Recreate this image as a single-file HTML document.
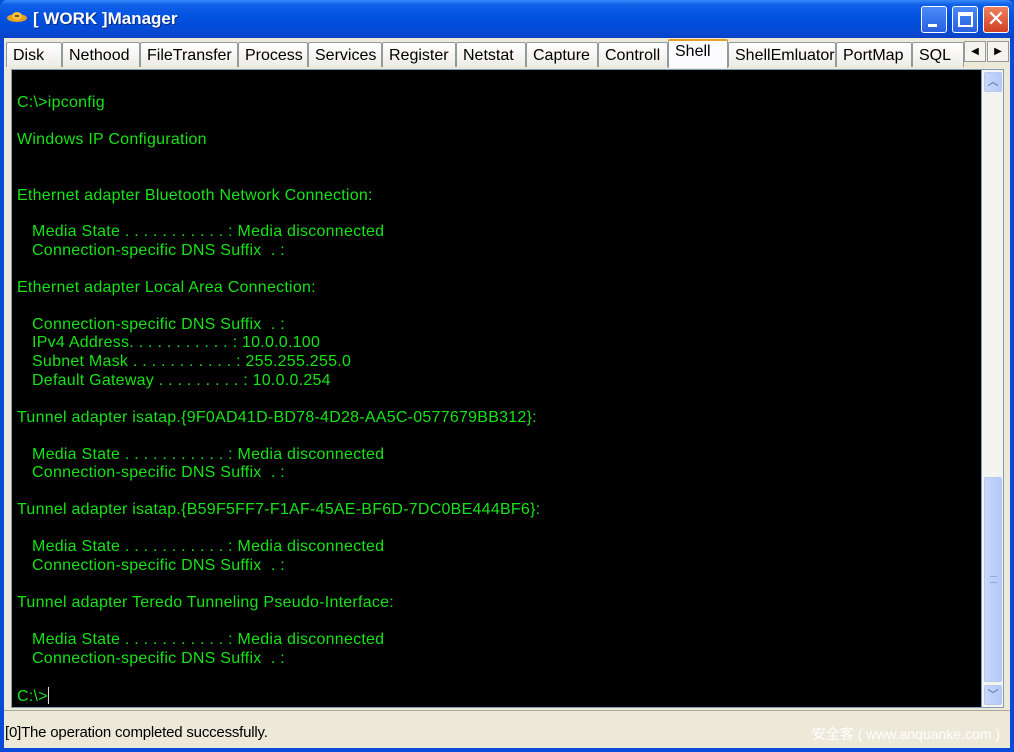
<!DOCTYPE html>
<html><head><meta charset="utf-8"><style>
*{margin:0;padding:0;box-sizing:border-box}
body{width:1014px;height:752px;overflow:hidden;background:#0a4ad8;font-family:Tahoma,"Liberation Sans","DejaVu Sans",sans-serif;position:relative}
#title{position:absolute;left:0;top:0;width:1014px;height:38px;background:linear-gradient(#3a8af8 0,#1060e8 12%,#0050e0 50%,#0848d0 90%,#0a40c0 100%);border-radius:7px 7px 0 0}
#title .t{position:absolute;left:33px;top:9px;color:#fff;font-weight:bold;font-size:17px;font-family:"Liberation Sans",sans-serif;text-shadow:1px 1px 0 #0a2a80}
.btn{position:absolute;top:6px;width:26px;height:27px;border:1px solid #fff;border-radius:3px;background:linear-gradient(#4a8af8,#2a60e0)}
#frame{position:absolute;left:4px;top:38px;width:1006px;height:710px;background:#ece9d8}
.tab{position:absolute;top:4px;height:25px;border:1px solid #919b9c;border-bottom:none;background:linear-gradient(#fff,#ecebe5);font-size:16px;font-family:"Liberation Sans",sans-serif;padding:4px 0 0 6px;color:#000;border-radius:2px 2px 0 0}
#con{position:absolute;left:7px;top:31px;width:971px;height:639px;background:#000;border:1px solid #7f9db9}
.l{position:absolute;left:5px;font-size:16px;font-family:"Liberation Sans",sans-serif;color:#17e317;white-space:pre;letter-spacing:0.25px}
.i{left:20px}
#sb{position:absolute;left:978px;top:31px;width:22px;height:639px;background:#f4f4f0;border:1px solid #7f9db9;border-left:none}
.sbb{position:absolute;left:2px;width:18px;height:20px;border:1px solid #b8c8f0;border-radius:2px;background:linear-gradient(90deg,#c8d8fc,#b4c8f8);color:#4d6185;font-size:11px;text-align:center;line-height:18px}
#status{position:absolute;left:0;top:672px;width:1006px;height:35px;border-top:1px solid #aca899}
</style></head><body>
<div id="title">
<svg style="position:absolute;left:6px;top:11px" width="22" height="14"><ellipse cx="11" cy="7" rx="10" ry="4" fill="#e8a020"/><ellipse cx="11" cy="5" rx="5" ry="4" fill="#f8c040"/><rect x="9" y="4" width="4" height="2" fill="#805010"/></svg>
<div class="t">[ WORK ]Manager</div>
<div class="btn" style="left:921px"><div style="position:absolute;left:6px;top:17px;width:9px;height:3px;background:#fff"></div></div>
<div class="btn" style="left:952px"><div style="position:absolute;left:5px;top:5px;width:15px;height:15px;border:2px solid #fff;border-top-width:4px"></div></div>
<div class="btn" style="left:983px;background:linear-gradient(#f08060,#d04020);color:#fff;font-size:22px;text-align:center;line-height:25px;font-family:'DejaVu Sans',sans-serif">✕</div>
</div>
<div id="frame">
<div class="tab" style="left:2px;width:56px">Disk</div>
<div class="tab" style="left:58px;width:78px">Nethood</div>
<div class="tab" style="left:136px;width:98px">FileTransfer</div>
<div class="tab" style="left:234px;width:70px">Process</div>
<div class="tab" style="left:304px;width:74px">Services</div>
<div class="tab" style="left:378px;width:74px">Register</div>
<div class="tab" style="left:452px;width:70px">Netstat</div>
<div class="tab" style="left:522px;width:72px">Capture</div>
<div class="tab" style="left:594px;width:70px">Controll</div>
<div class="tab" style="left:664px;width:60px;top:1px;height:29px;background:#fcfcfe;border-top:2px solid #e8a020;padding-top:2px">Shell</div>
<div class="tab" style="left:724px;width:108px">ShellEmluator</div>
<div class="tab" style="left:832px;width:76px">PortMap</div>
<div class="tab" style="left:908px;width:52px">SQL</div>
<div style="position:absolute;left:960px;top:3px;width:22px;height:21px;border:1px solid #999;background:#f4f3ee;font-size:10px;text-align:center;line-height:19px">◀</div>
<div style="position:absolute;left:983px;top:3px;width:22px;height:21px;border:1px solid #999;background:#f4f3ee;font-size:10px;text-align:center;line-height:19px">▶</div>
<div id="con">
<div class="l" style="top:24px">C:\&gt;ipconfig</div>
<div class="l" style="top:61px">Windows IP Configuration</div>
<div class="l" style="top:117px">Ethernet adapter Bluetooth Network Connection:</div>
<div class="l i" style="top:153px">Media State . . . . . . . . . . . : Media disconnected</div>
<div class="l i" style="top:172px">Connection-specific DNS Suffix  . :</div>
<div class="l" style="top:209px">Ethernet adapter Local Area Connection:</div>
<div class="l i" style="top:246px">Connection-specific DNS Suffix  . :</div>
<div class="l i" style="top:264px">IPv4 Address. . . . . . . . . . . : 10.0.0.100</div>
<div class="l i" style="top:283px">Subnet Mask . . . . . . . . . . . : 255.255.255.0</div>
<div class="l i" style="top:302px">Default Gateway . . . . . . . . . : 10.0.0.254</div>
<div class="l" style="top:339px">Tunnel adapter isatap.{9F0AD41D-BD78-4D28-AA5C-0577679BB312}:</div>
<div class="l i" style="top:376px">Media State . . . . . . . . . . . : Media disconnected</div>
<div class="l i" style="top:394px">Connection-specific DNS Suffix  . :</div>
<div class="l" style="top:431px">Tunnel adapter isatap.{B59F5FF7-F1AF-45AE-BF6D-7DC0BE444BF6}:</div>
<div class="l i" style="top:468px">Media State . . . . . . . . . . . : Media disconnected</div>
<div class="l i" style="top:487px">Connection-specific DNS Suffix  . :</div>
<div class="l" style="top:524px">Tunnel adapter Teredo Tunneling Pseudo-Interface:</div>
<div class="l i" style="top:561px">Media State . . . . . . . . . . . : Media disconnected</div>
<div class="l i" style="top:580px">Connection-specific DNS Suffix  . :</div>
<div class="l" style="top:617px">C:\&gt;<span style="display:inline-block;width:1px;height:17px;background:#ddd;vertical-align:-3px"></span></div>
</div>
<div id="sb">
<div class="sbb" style="top:2px">︿</div>
<div style="position:absolute;left:2px;top:407px;width:18px;height:205px;border:1px solid #b8c8f0;border-radius:2px;background:linear-gradient(90deg,#c8d8fc,#b4c8f8)"><div style="position:absolute;left:5px;top:98px;width:7px;height:7px;border-top:1px solid #90a8e0;border-bottom:1px solid #90a8e0"></div></div>
<div class="sbb" style="top:615px">﹀</div>
</div>
<div id="status">
<div style="position:absolute;left:1px;top:13px;font-size:15px;font-family:'Liberation Sans',sans-serif;letter-spacing:-0.2px">[0]The operation completed successfully.</div>
<div style="position:absolute;right:10px;top:13px;font-size:14px;color:#fff;font-family:'Liberation Sans','Noto Sans CJK SC',sans-serif">安全客 ( www.anquanke.com )</div>
</div>
</div>
</body></html>
